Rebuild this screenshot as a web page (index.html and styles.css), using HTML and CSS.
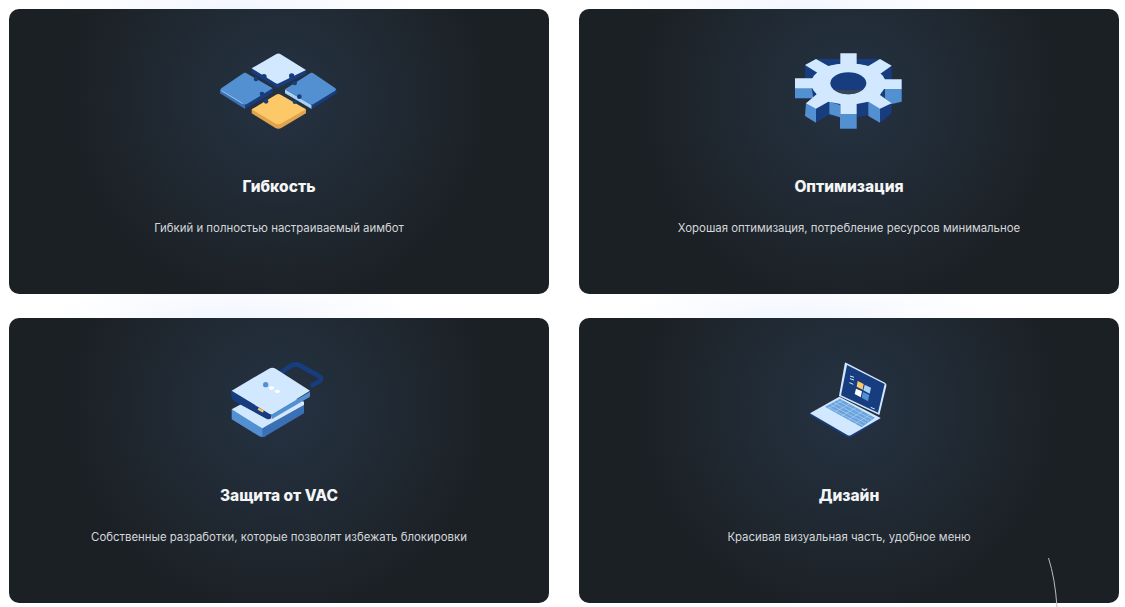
FILE: index.html
```html
<!DOCTYPE html>
<html lang="ru">
    <head>
        <meta charset="UTF-8" />
        <meta name="viewport" content="width=device-width, initial-scale=1.0" />
        <title>Преимущества</title>
        <link rel="stylesheet" href="styles.css">
    </head>
    <body>
        <div class="features">
            <div class="card">
                <svg class="icon" viewBox="-3 0 480 300">
                    <!-- left piece -->
                    <path class="side-dark" d="M135 195V207L218 158V145Z"/>
                    <path class="deep" d="M60 148V160L135 207V195Z"/>
                    <path class="mid" d="M128 101Q135 96 142 101L218 145L142 191Q135 196 128 191L66 153Q58 148 66 143Z"/>
                    <path class="edge" d="M64 152L128 191"/>
                    <circle class="side-dark" cx="186" cy="162" r="7"/>
                    <circle class="side-dark" cx="168" cy="117" r="7"/>
                    <!-- right piece -->
                    <path class="side-light" d="M255 148V160L335 207V195Z"/>
                    <path class="side-dark" d="M335 195V207L410 160V148Z"/>
                    <path class="mid" d="M328 101Q335 96 342 101L404 143Q412 148 404 153L342 191Q335 196 328 191L255 148Z"/>
                    <circle class="side-dark" cx="298" cy="170" r="7"/>
                    <circle class="side-dark" cx="284" cy="129" r="7"/>
                    <!-- top piece -->
                    <path class="side-dark" d="M155 85V98L232 144L318 102V90Z"/>
                    <path class="light" d="M228 43Q235 38 242 43L318 90L238 129Q232 133 226 129L155 85Z"/>
                    <circle class="side-dark" cx="275" cy="108" r="8"/>
                    <circle class="side-dark" cx="192" cy="110" r="8"/>
                    <!-- bottom piece -->
                    <path class="side-orange" d="M155 208V220L225 263Q235 269 245 263L318 220V208Z"/>
                    <path class="orange" d="M228 164Q235 160 242 164L318 208L245 250Q235 256 225 250L155 208Z"/>
                    <circle class="side-dark" cx="198" cy="184" r="7"/>
                    <circle class="side-dark" cx="284" cy="186" r="6"/>
                </svg>
                <h3 class="card-title">Гибкость</h3>
                <p class="card-text">Гибкий и полностью настраиваемый аимбот</p>
            </div>
            <div class="card">
                <svg class="icon" viewBox="-33 0 480 300">
                    <!-- depth of the gear -->
                    <path class="side-dark" d="M75 75V120H45V175H100V190H78V215L108 248L145 225L180 232V266H230V232L265 225L300 248L335 220V175H365V120H335V77L300 57H110Z"/>
                    <path class="mid" d="M45 143H95L100 175H45Z"/>
                    <path class="mid" d="M78 188L108 205V248L75 228Z"/>
                    <path class="mid" d="M148 185L180 195V232L148 222Z"/>
                    <path class="mid" d="M180 222H230V266H180Z"/>
                    <path class="mid" d="M265 185L300 205V248L265 228Z"/>
                    <path class="mid" d="M315 147H365V185L335 192L315 175Z"/>
                    <!-- top face -->
                    <path class="light" d="M181 40H230V72L265 78L300 57L335 77L300 102L310 118H365V147H310L300 165L335 190L300 206L265 185L230 192V222H181V192L145 185L108 206L78 190L110 163L100 145H45V115H100L112 98L75 75L108 57L145 78L181 72Z"/>
                    <ellipse class="light" cx="205" cy="130" rx="112" ry="60"/>
                    <ellipse class="side-dark" cx="205" cy="130" rx="54" ry="33"/>
                    <path class="hole-shade" d="M160 148Q205 178 250 148Q205 154 160 148Z"/>
                </svg>
                <h3 class="card-title">Оптимизация</h3>
                <p class="card-text">Хорошая оптимизация, потребление ресурсов минимальное</p>
            </div>
            <div class="card">
                <svg class="icon" viewBox="-30 -3 480 300">
                    <!-- lower block -->
                    <path class="mid" d="M68 178V208L150 258Q160 264 170 258V230Z"/>
                    <path class="deep" d="M160 235L285 165V190L170 258L160 262Z"/>
                    <path class="light" d="M68 178L175 120L285 155V165L160 235Z"/>
                    <!-- shackle -->
                    <path class="shackle" d="M212 70L248 46Q260 40 272 46L330 78Q342 86 332 93L305 108"/>
                    <!-- upper block -->
                    <path class="side-dark" d="M66 120V135Q68 150 80 156L172 206Q188 212 188 195V180Z"/>
                    <path class="mid" d="M188 193L303 125V140L188 208Z"/>
                    <path class="light" d="M180 56Q190 50 200 56L303 122L190 192Q186 194 182 192L68 122Z"/>
                    <circle class="dot-blue" cx="170" cy="104" r="8"/>
                    <ellipse class="dot-white" cx="188" cy="114" rx="8" ry="5"/>
                    <ellipse class="dot-white" cx="205" cy="124" rx="8" ry="5"/>
                    <rect class="slot" x="146" y="177" width="18" height="7" rx="2" transform="rotate(28 155 181)"/>
                </svg>
                <h3 class="card-title">Защита от VAC</h3>
                <p class="card-text">Собственные разработки, которые позволят избежать блокировки</p>
            </div>
            <div class="card">
                <svg class="icon" viewBox="-63 -3 480 300">
                    <!-- screen -->
                    <path class="light" d="M168 38L285 98Q291 102 289 108L268 195L147 138L164 42Q165 37 168 38Z"/>
                    <path class="side-dark" d="M171 45L284 102L264 188L153 136Z"/>
                    <path class="screen-line" d="M180 78L192 82M180 86L192 90M178 98L190 103M242 172L254 177"/>
                    <path class="orange" d="M203 93L221 102L218 119L200 110Z"/>
                    <path class="pane-sky" d="M224 104L243 113L239 131L220 121Z"/>
                    <path class="pane-white" d="M198 116L216 124L212 142L194 132Z"/>
                    <path class="mid" d="M219 126L238 135L234 154L215 143Z"/>
                    <!-- base -->
                    <path class="side-dark" d="M60 190V196L170 260Q180 264 190 258L270 208V204Z"/>
                    <path class="light" d="M148 140L272 204L182 256Q178 258 172 255L60 190Z"/>
                    <path class="keyboard" d="M150 146L255 203L215 232L105 170Z"/>
                    <path class="keys" d="M142 152L246 208M132 158L237 214M122 164L228 220M113 170L220 227M160 150L117 175M180 161L135 186M200 172L155 198M220 183L175 209M240 194L195 221"/>
                </svg>
                <h3 class="card-title">Дизайн</h3>
                <p class="card-text">Красивая визуальная часть, удобное меню</p>
                <svg class="swoosh" viewBox="0 0 10 49">
                    <path d="M0.5 0Q7 20 9 49"/>
                </svg>
            </div>
        </div>
    </body>
</html>
```

FILE: styles.css
```css
html,
body {
    height: 100%;
}
body {
    font-family: Inter, "Liberation Sans", sans-serif;
    margin: 0;
    background-color: #fff;
    overflow: hidden;
}
.features {
    display: grid;
    grid-template-columns: 540px 540px;
    grid-auto-rows: 285px;
    column-gap: 30px;
    row-gap: 24px;
    padding: 9px 6px 0 9px;
}
.card {
    position: relative;
    display: flex;
    flex-direction: column;
    align-items: center;
    padding-top: 31px;
    box-sizing: border-box;
    border-radius: 10px;
    background-color: #1b2025;
    background-image: radial-gradient(circle 210px at 50% 31%, #253242 0%, #212b36 45%, #1d2329 85%, #1b2025 100%);
}
/* pale glow behind the top edge of the card */
.card::before {
    content: "";
    position: absolute;
    z-index: -1;
    left: 7%;
    top: -40px;
    width: 70%;
    height: 80px;
    background: radial-gradient(closest-side, #f2f6ff, rgba(242, 246, 255, 0));
}
.icon {
    width: 160px;
    height: 100px;
}
.card-title {
    margin: 37px 0 0;
    font-size: 15.5px;
    line-height: 20px;
    font-weight: 800;
    color: #f4f5f6;
}
.card-text {
    margin: 23px 0 0;
    font-size: 11.4px;
    line-height: 16px;
    color: #d4d7da;
}
.swoosh {
    position: absolute;
    left: 469px;
    top: 240px;
    width: 10px;
    height: 49px;
    overflow: visible;
}
.swoosh path {
    fill: none;
    stroke: #b9bcbf;
    stroke-width: 1;
}

/* icon colours */
.light { fill: #d2e8ff; }
.mid { fill: #5390d2; }
.deep { fill: #3a70b5; }
.side-dark { fill: #173d7f; }
.side-light { fill: #a9d0f5; }
.orange { fill: #fdc868; }
.side-orange { fill: #e0a44e; }
.hole-shade { fill: #3a4656; }
.dot-blue { fill: #5390d2; }
.dot-white { fill: #fff; }
.slot { fill: #fdc868; }
.keyboard { fill: #6ba3dd; }
.pane-sky { fill: #a9d0f5; }
.pane-white { fill: #fff; }
.edge {
    fill: none;
    stroke: #d2e8ff;
    stroke-width: 2;
}
.shackle {
    fill: none;
    stroke: #173d7f;
    stroke-width: 14;
}
.screen-line {
    fill: none;
    stroke: #d2e8ff;
    stroke-width: 3;
}
.keys {
    fill: none;
    stroke: #a9d0f5;
    stroke-width: 2;
}
```
